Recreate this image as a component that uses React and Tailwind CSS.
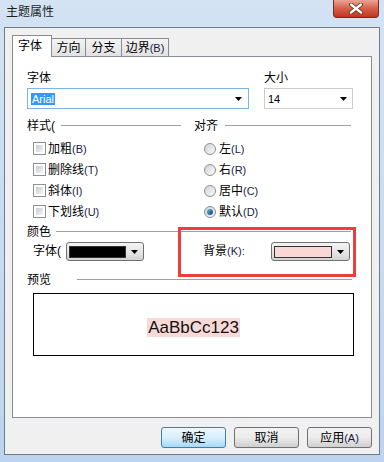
import React from 'react';

const Arrow = () => (
  <svg width="7" height="4" viewBox="0 0 7 4">
    <polygon points="0,0 7,0 3.5,4" fill="#000" />
  </svg>
);

function Lbl({ cn, en }) {
  return (
    <span>
      {cn}
      <span className="text-[11px] text-[#1a1a40]">{en}</span>
    </span>
  );
}

function Header({ label, gap, width }) {
  return (
    <div className={`flex h-[15px] items-start ${width}`}>
      <span className="leading-[15px]">{label}</span>
      <div className={`mt-[6px] h-px flex-1 bg-[#a0a0a0] ${gap}`} />
    </div>
  );
}

function CheckRow({ cn, en }) {
  return (
    <div className="flex h-[21px] items-center pl-[6px]">
      <div className="h-[13px] w-[13px] border border-[#8e8f8f] bg-white p-[2px]">
        <div className="h-full w-full bg-linear-to-br from-[#c6cad0] to-[#f5f5f5]" />
      </div>
      <span className="ml-[2px]">
        <Lbl cn={cn} en={en} />
      </span>
    </div>
  );
}

function RadioRow({ cn, en, on }) {
  return (
    <div className="flex h-[21px] items-center pl-[10px]">
      <div className="flex h-[12px] w-[12px] items-center justify-center rounded-full border border-[#8e8f8f] bg-linear-to-br from-[#cfd2d7] to-[#fbfbfb]">
        {on && <div className="h-[6px] w-[6px] rounded-full bg-linear-to-br from-[#5cb6e8] to-[#13436b]" />}
      </div>
      <span className="ml-[3px]">
        <Lbl cn={cn} en={en} />
      </span>
    </div>
  );
}

function SwatchCombo({ color, width }) {
  return (
    <div className={`flex h-[19px] items-center rounded-[3px] border border-[#707070] bg-linear-to-b from-[#f4f4f4] via-[#e6e6e6] to-[#d3d3d3] pl-[2px] pr-[5px] ${width}`}>
      <div className={`h-[12px] flex-1 border border-[#333] ${color}`} />
      <div className="ml-[5px]">
        <Arrow />
      </div>
    </div>
  );
}

function Button({ children, primary }) {
  return (
    <div
      className={`flex h-[21px] w-[65px] items-center justify-center rounded-[3px] border ${
        primary
          ? 'border-[#3c7fb1] bg-linear-to-b from-[#eaf6fd] via-[#d9f0fc] to-[#a7d9f5]'
          : 'border-[#707070] bg-linear-to-b from-[#f2f2f2] via-[#ebebeb] to-[#cfcfcf]'
      }`}
    >
      {children}
    </div>
  );
}

export default function App() {
  return (
    <div className="flex h-[462px] w-[384px] flex-col bg-linear-to-b from-[#d3e3f4] to-[#bcd4ee] font-['Liberation_Sans','Noto_Sans_CJK_SC',sans-serif] text-[12px] text-black">
      {/* Title bar */}
      <div className="flex h-[27px] shrink-0 items-start justify-between pl-[6px] pr-[5px]">
        <span className="mt-[5px] leading-[15px] text-[#1e1e1e]">主题属性</span>
        <div className="flex h-[18px] w-[46px] items-center justify-center rounded-b-[4px] border border-t-0 border-[#7a2a20] bg-linear-to-b from-[#e9a594] via-[#d55f49] to-[#c0361f]">
          <svg width="14" height="11" viewBox="0 0 14 11">
            <path d="M2 1.5 L12 9.5 M12 1.5 L2 9.5" stroke="#5a2a22" strokeWidth="4" strokeLinecap="round" />
            <path d="M2 1.5 L12 9.5 M12 1.5 L2 9.5" stroke="#ffffff" strokeWidth="2.4" strokeLinecap="round" />
          </svg>
        </div>
      </div>

      {/* Client area */}
      <div className="ml-[4px] flex h-[428px] w-[376px] flex-col border border-[#6f7b88] bg-[#f0f0f0] px-[7px] pt-[7px]">
        {/* Tabs */}
        <div className="flex h-[21px] items-end">
          <div className="relative z-10 -mb-px flex h-[22px] w-[40px] items-start border border-b-0 border-[#898c95] bg-white pl-[5px] pt-[4px] leading-[13px]">
            字体
          </div>
          <div className="flex h-[18px] w-[34px] items-center justify-center border-r border-t border-[#898c95] bg-linear-to-b from-[#f3f3f3] to-[#e2e2e2]">
            方向
          </div>
          <div className="flex h-[18px] w-[36px] items-center justify-center border-r border-t border-[#898c95] bg-linear-to-b from-[#f3f3f3] to-[#e2e2e2]">
            分支
          </div>
          <div className="flex h-[18px] w-[47px] items-center justify-center border-r border-t border-[#898c95] bg-linear-to-b from-[#f3f3f3] to-[#e2e2e2]">
            <Lbl cn="边界" en="(B)" />
          </div>
        </div>

        {/* Panel */}
        <div className="relative flex h-[362px] w-[360px] flex-col border border-[#898c95] bg-white pl-[14px] pt-[14px]">
          {/* Font row */}
          <div className="flex gap-[15px]">
            <div className="flex w-[222px] flex-col">
              <span className="h-[15px] leading-[15px]">字体</span>
              <div className="mt-[2px] flex h-[21px] items-center justify-between border border-[#7eb4ea] bg-white pl-[3px] pr-[6px]">
                <span className="bg-[#3399ff] px-px text-[11px] leading-[12px] text-white">Arial</span>
                <Arrow />
              </div>
            </div>
            <div className="flex w-[89px] flex-col">
              <span className="h-[15px] leading-[15px]">大小</span>
              <div className="mt-[2px] flex h-[21px] items-center justify-between border border-[#c9ccd1] bg-white pl-[3px] pr-[5px]">
                <span className="text-[11px] leading-[12px]">14</span>
                <Arrow />
              </div>
            </div>
          </div>

          {/* Style / Align groups */}
          <div className="mt-[10px] flex gap-[13px]">
            <div className="flex w-[154px] flex-col">
              <Header label="样式(" gap="ml-[6px]" width="w-full" />
              <div className="mt-[4px] flex flex-col">
                <CheckRow cn="加粗" en="(B)" />
                <CheckRow cn="删除线" en="(T)" />
                <CheckRow cn="斜体" en="(I)" />
                <CheckRow cn="下划线" en="(U)" />
              </div>
            </div>
            <div className="flex w-[157px] flex-col">
              <Header label="对齐" gap="ml-[7px]" width="w-full" />
              <div className="mt-[4px] flex flex-col">
                <RadioRow cn="左" en="(L)" />
                <RadioRow cn="右" en="(R)" />
                <RadioRow cn="居中" en="(C)" />
                <RadioRow cn="默认" en="(D)" on />
              </div>
            </div>
          </div>

          {/* Colour */}
          <div className="mt-[3px]">
            <Header label="颜色" gap="ml-[5px]" width="w-[324px]" />
          </div>
          <div className="mt-[2px] flex h-[19px] items-start pl-[6px]">
            <span className="w-[33px] pt-[3px] leading-[13px]">字体(</span>
            <SwatchCombo color="bg-black" width="w-[78px]" />
            <span className="ml-[59px] w-[68px] pt-[3px] leading-[13px]">
              <Lbl cn="背景" en="(K):" />
            </span>
            <SwatchCombo color="bg-[#f8d7d4]" width="w-[79px]" />
          </div>

          {/* Preview */}
          <div className="mt-[12px]">
            <Header label="预览" gap="ml-[26px]" width="w-[325px]" />
          </div>
          <div className="ml-[6px] mt-[5px] flex h-[63px] w-[321px] items-center justify-center border border-black bg-white pt-[6px]">
            <span className="bg-[#f9d9d6] px-px text-[17px] leading-[19px] text-[#111]">AaBbCc123</span>
          </div>

          {/* Annotation box */}
          <div className="absolute left-[165px] top-[170px] h-[50px] w-[178px] border-[3px] border-[#f03c3c]" />
        </div>

        {/* Buttons */}
        <div className="mt-[9px] flex w-[360px] justify-end gap-[8px]">
          <Button primary>确定</Button>
          <Button>取消</Button>
          <Button>
            <Lbl cn="应用" en="(A)" />
          </Button>
        </div>
      </div>
    </div>
  );
}
